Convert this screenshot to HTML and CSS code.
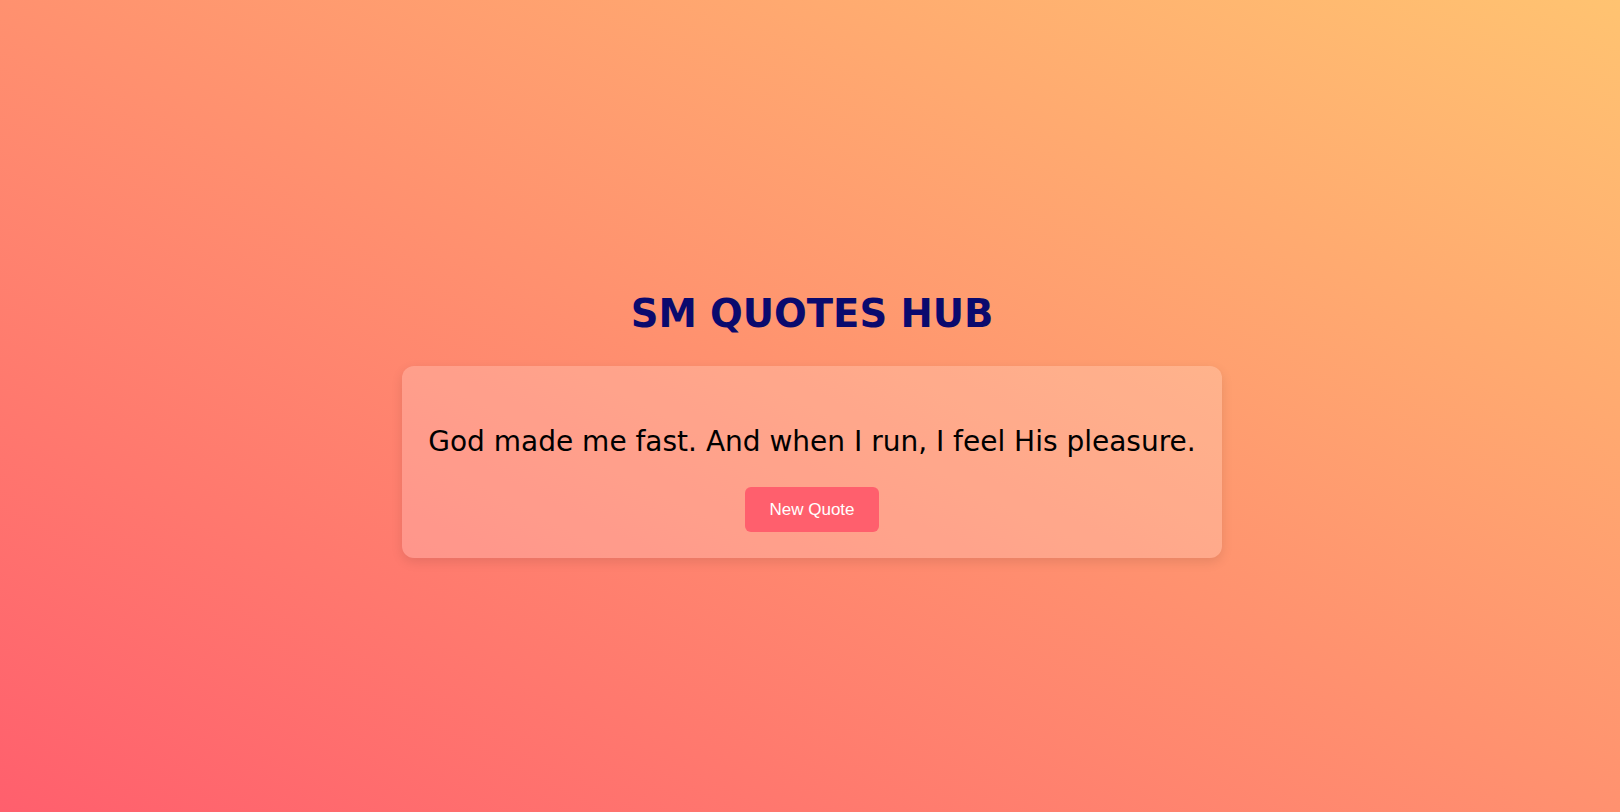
FILE: index.html
```html
<!DOCTYPE html>
<html lang="en">
<head>
<meta charset="UTF-8">
<title>SM Quotes Hub</title>
<link rel="stylesheet" href="styles.css">
</head>
<body>
  <main class="page">
    <h1 class="title">SM QUOTES HUB</h1>
    <section class="card">
      <p class="quote">God made me fast. And when I run, I feel His pleasure.</p>
      <button class="btn" type="button">New Quote</button>
    </section>
  </main>
</body>
</html>
```

FILE: styles.css
```css
html, body {
  margin: 0;
  padding: 0;
  height: 100%;
}
body {
  background: linear-gradient(to top right, #ff5f6d, #ffc371);
  font-family: "Comic Sans MS", "DejaVu Sans", sans-serif;
}
.page {
  height: 100%;
  display: flex;
  flex-direction: column;
  align-items: center;
  justify-content: center;
  padding-top: 36px;
  padding-left: 4px;
  box-sizing: border-box;
}
.title {
  margin: 0 0 28px;
  font-size: 38.5px;
  font-weight: bold;
  color: #0a0a6e;
  line-height: 48px;
}
.card {
  width: 820px;
  height: 192px;
  box-sizing: border-box;
  background: rgba(255, 255, 255, 0.2);
  border-radius: 12px;
  box-shadow: 0 4px 12px rgba(0, 0, 0, 0.1);
  display: flex;
  flex-direction: column;
  align-items: center;
  padding-top: 56px;
}
.quote {
  margin: 0 0 25px;
  font-size: 28px;
  line-height: 40px;
  color: #000;
  white-space: nowrap;
}
.btn {
  width: 134px;
  height: 45px;
  border: none;
  border-radius: 6px;
  background: #ff5f6d;
  color: #fff;
  font-family: "Liberation Sans", Arial, sans-serif;
  font-size: 17px;
  cursor: pointer;
}
```
